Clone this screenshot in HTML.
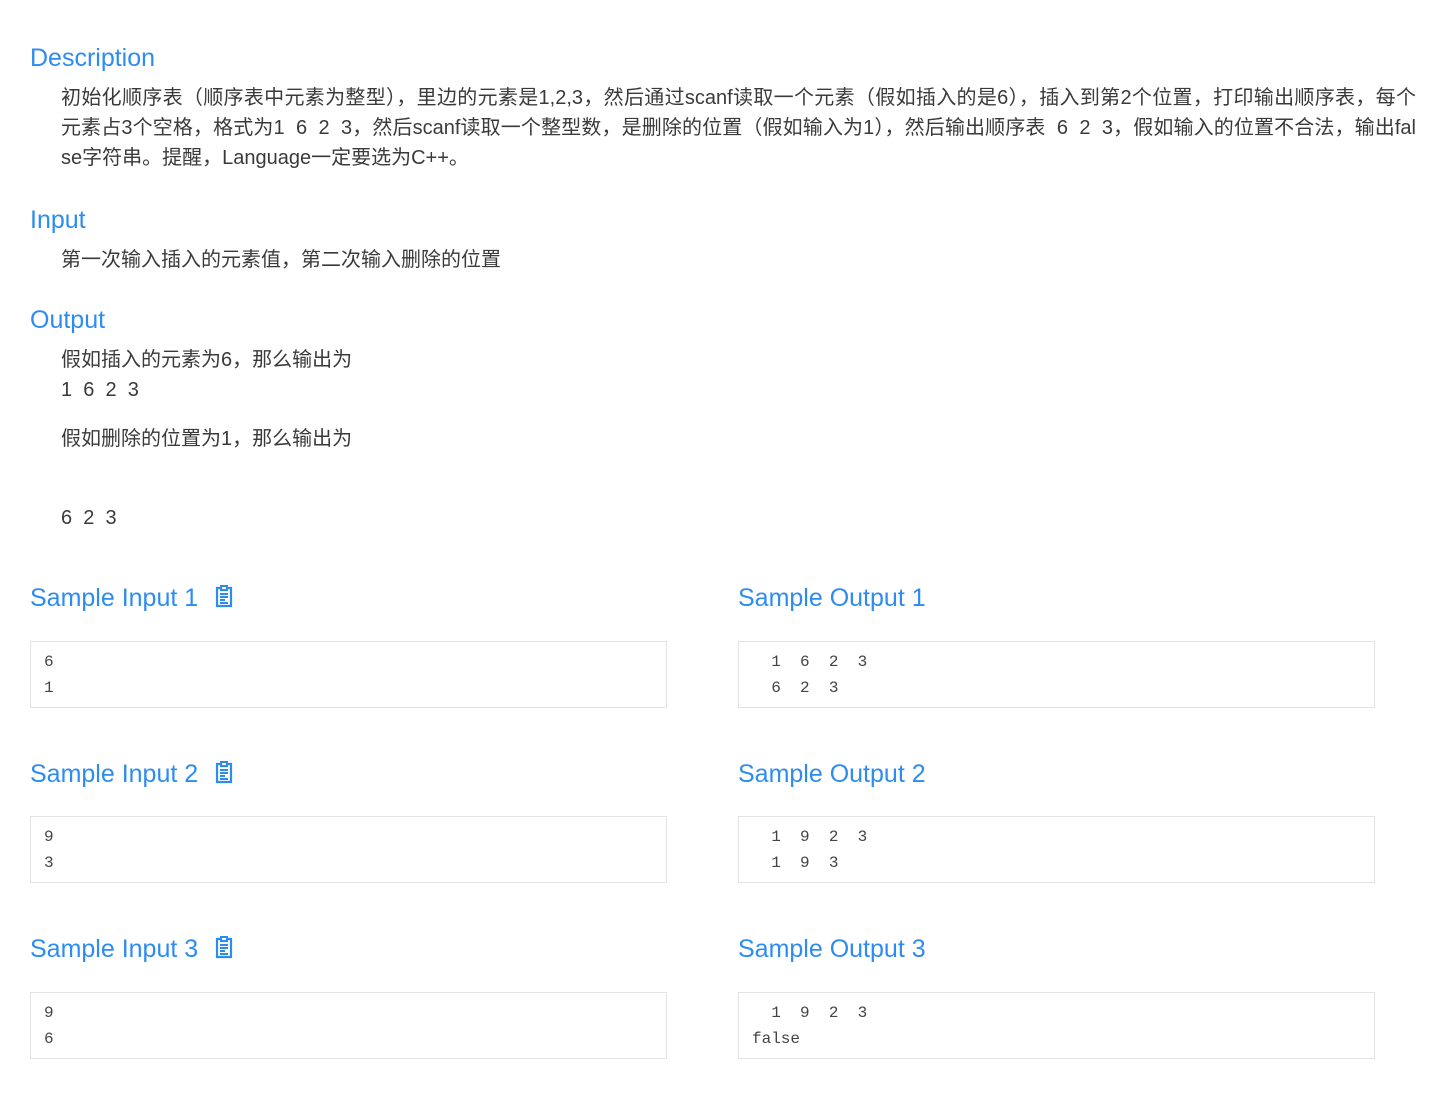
<!DOCTYPE html>
<html><head><meta charset="utf-8">
<style>
body{margin:0;width:1434px;height:1102px;background:#fff;font-family:"Liberation Sans","Noto Sans CJK SC",sans-serif;color:#333;position:relative;overflow:hidden}
.h{position:absolute;left:30px;color:#2d8cf0;font-size:25px;line-height:30px;white-space:nowrap}
.t{position:absolute;left:61px;font-size:20px;line-height:30px;white-space:nowrap;color:#3a3a3a}
.j{width:1355px;text-align:justify;text-align-last:justify}
.box{position:absolute;border:1px solid #e3e3e3;font-family:"Liberation Mono",monospace;font-size:16px;line-height:26px;color:#444;padding:7px 0 0 13px;box-sizing:border-box;white-space:pre;height:67px;width:637px}
.ic{display:inline-block;vertical-align:-2px;margin-left:16px}
</style></head><body>
<div class="h" style="top:43px">Description</div>
<div class="t j" style="top:83px">初始化顺序表（顺序表中元素为整型），里边的元素是1,2,3，然后通过scanf读取一个元素（假如插入的是6），插入到第2个位置，打印输出顺序表，每个</div>
<div class="t j" style="top:113px">元素占3个空格，格式为1&nbsp;&nbsp;6&nbsp;&nbsp;2&nbsp;&nbsp;3，然后scanf读取一个整型数，是删除的位置（假如输入为1），然后输出顺序表&nbsp;&nbsp;6&nbsp;&nbsp;2&nbsp;&nbsp;3，假如输入的位置不合法，输出fal</div>
<div class="t" style="top:143px">se字符串。提醒，Language一定要选为C++。</div>
<div class="h" style="top:205px">Input</div>
<div class="t" style="top:245px">第一次输入插入的元素值，第二次输入删除的位置</div>
<div class="h" style="top:305px">Output</div>
<div class="t" style="top:345px">假如插入的元素为6，那么输出为</div>
<div class="t" style="top:375px">1&nbsp;&nbsp;6&nbsp;&nbsp;2&nbsp;&nbsp;3</div>
<div class="t" style="top:424px">假如删除的位置为1，那么输出为</div>
<div class="t" style="top:503px">6&nbsp;&nbsp;2&nbsp;&nbsp;3</div>

<div class="h" style="top:583px">Sample Input 1<svg class="ic" width="20" height="24" viewBox="0 0 20 24"><path d="M3 4h14v18H3z" fill="none" stroke="#2d8cf0" stroke-width="2.2"/><path d="M7 2h6v4H7z" fill="#fff" stroke="#2d8cf0" stroke-width="2"/><path d="M6 10h8M6 13h8M6 16h5M6 19h8" stroke="#2d8cf0" stroke-width="2"/></svg></div>
<div class="h" style="top:583px;left:738px">Sample Output 1</div>
<div class="box" style="left:30px;top:641px">6
1</div>
<div class="box" style="left:738px;top:641px">  1  6  2  3
  6  2  3</div>

<div class="h" style="top:759px">Sample Input 2<svg class="ic" width="20" height="24" viewBox="0 0 20 24"><path d="M3 4h14v18H3z" fill="none" stroke="#2d8cf0" stroke-width="2.2"/><path d="M7 2h6v4H7z" fill="#fff" stroke="#2d8cf0" stroke-width="2"/><path d="M6 10h8M6 13h8M6 16h5M6 19h8" stroke="#2d8cf0" stroke-width="2"/></svg></div>
<div class="h" style="top:759px;left:738px">Sample Output 2</div>
<div class="box" style="left:30px;top:816px">9
3</div>
<div class="box" style="left:738px;top:816px">  1  9  2  3
  1  9  3</div>

<div class="h" style="top:934px">Sample Input 3<svg class="ic" width="20" height="24" viewBox="0 0 20 24"><path d="M3 4h14v18H3z" fill="none" stroke="#2d8cf0" stroke-width="2.2"/><path d="M7 2h6v4H7z" fill="#fff" stroke="#2d8cf0" stroke-width="2"/><path d="M6 10h8M6 13h8M6 16h5M6 19h8" stroke="#2d8cf0" stroke-width="2"/></svg></div>
<div class="h" style="top:934px;left:738px">Sample Output 3</div>
<div class="box" style="left:30px;top:992px">9
6</div>
<div class="box" style="left:738px;top:992px">  1  9  2  3
false</div>
</body></html>
